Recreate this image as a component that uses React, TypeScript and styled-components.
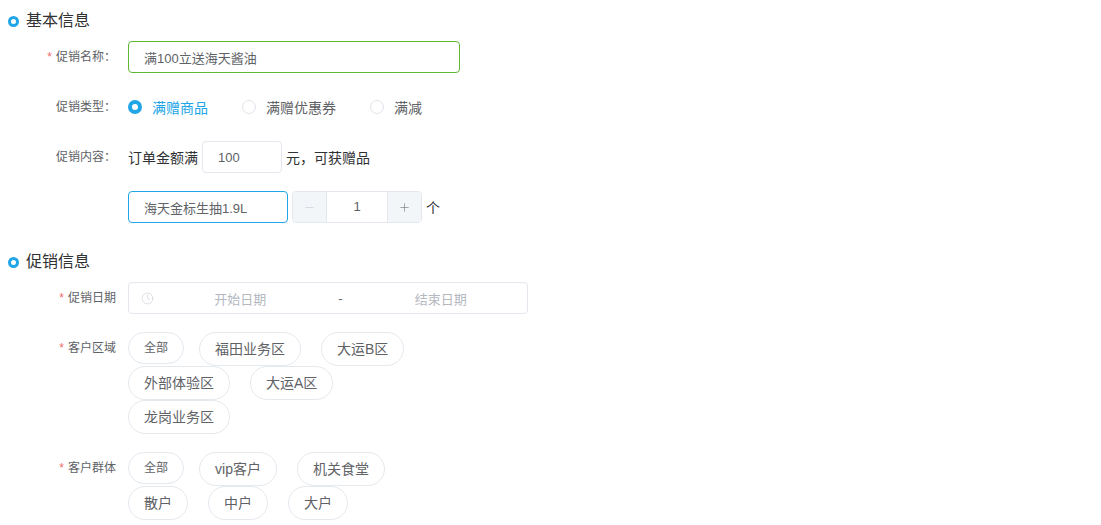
import React from 'react';
import styled, { createGlobalStyle } from 'styled-components';
import { Clock, Minus, Plus } from 'lucide-react';

const GlobalStyle = createGlobalStyle`
  html, body {
    margin: 0;
    padding: 0;
    background: #fff;
  }
  body {
    font-family: "Liberation Sans", "Noto Sans CJK SC", sans-serif;
    color: #303133;
  }
  * {
    box-sizing: border-box;
  }
`;

const Page = styled.div`
  width: 1101px;
  height: 525px;
  padding: 10px 0 0 8px;
  overflow: hidden;
`;

const SectionTitle = styled.h2`
  display: flex;
  align-items: center;
  gap: 7px;
  height: 22px;
  margin: 0 0 9px;
  font-size: 16px;
  font-weight: 400;
  line-height: 22px;
  color: #303133;

  &:not(:first-child) {
    margin-top: 28px;
  }
`;

const Dot = styled.span`
  width: 11px;
  height: 11px;
  border: 3px solid #20a5e6;
  border-radius: 50%;
  background: #fff;
`;

const Row = styled.div`
  display: flex;
  align-items: flex-start;
  margin-bottom: 18px;

  &:last-child {
    margin-bottom: 0;
  }
`;

const Label = styled.label`
  flex: none;
  width: 108px;
  margin-right: 12px;
  font-size: 12px;
  line-height: 32px;
  text-align: right;
  color: #606266;
`;

const Star = styled.span`
  margin-right: 4px;
  color: #f56c6c;
`;

const Controls = styled.div`
  display: flex;
  align-items: center;
  min-height: 32px;
  font-size: 14px;
  color: #303133;
`;

const TextInput = styled.input<{ $width: number; $tone?: 'green' | 'blue' }>`
  width: ${({ $width }) => $width}px;
  height: 32px;
  padding: 0 15px;
  border: 1px solid
    ${({ $tone }) => ($tone === 'green' ? '#5fb832' : $tone === 'blue' ? '#20a5e6' : '#e4e7ed')};
  border-radius: 4px;
  outline: none;
  background: #fff;
  font: inherit;
  font-size: 13px;
  color: #606266;
`;

const RadioOption = styled.span<{ $checked?: boolean }>`
  display: inline-flex;
  align-items: center;
  gap: 10px;
  margin-right: 34px;
  font-size: 14px;
  color: ${({ $checked }) => ($checked ? '#20a5e6' : '#606266')};
`;

const RadioMark = styled.span<{ $checked?: boolean }>`
  width: 14px;
  height: 14px;
  border-radius: 50%;
  border: ${({ $checked }) => ($checked ? '4px solid #20a5e6' : '1px solid #dfe4ea')};
  background: #fff;
`;

const Inline = styled.span`
  margin: 0 4px;
  white-space: nowrap;

  &:first-child {
    margin-left: 0;
  }
`;

const Stepper = styled.div`
  display: flex;
  width: 130px;
  height: 32px;
  margin-left: 4px;
  border: 1px solid #e4e7ed;
  border-radius: 4px;
  overflow: hidden;
`;

const StepButton = styled.button<{ $muted?: boolean }>`
  display: flex;
  flex: none;
  align-items: center;
  justify-content: center;
  width: 33px;
  padding: 0;
  border: none;
  background: #f2f6f9;
  color: ${({ $muted }) => ($muted ? '#c0c4cc' : '#606266')};
`;

const StepValue = styled.div`
  flex: 1;
  border-left: 1px solid #e4e7ed;
  border-right: 1px solid #e4e7ed;
  font-size: 13px;
  line-height: 30px;
  text-align: center;
  color: #606266;
`;

const DateRange = styled.div`
  display: flex;
  align-items: center;
  width: 400px;
  height: 32px;
  padding-left: 12px;
  border: 1px solid #e4e7ed;
  border-radius: 4px;
  color: #c0c4cc;
`;

const DateText = styled.span`
  flex: 1;
  font-size: 13px;
  text-align: center;
  color: #b4b8bf;
`;

const DateDash = styled.span`
  flex: none;
  width: 28px;
  font-size: 13px;
  text-align: center;
  color: #606266;
`;

const ChipGroup = styled.div`
  display: flex;
  flex-wrap: wrap;
  align-items: flex-start;
  width: 300px;
`;

const Chip = styled.span<{ $all?: boolean }>`
  height: ${({ $all }) => ($all ? 32 : 34)}px;
  margin-right: ${({ $all }) => ($all ? 15 : 20)}px;
  margin-bottom: ${({ $all }) => ($all ? 2 : 0)}px;
  padding: 0 15px;
  border: 1px solid #e4e9ee;
  border-radius: 17px;
  background: #fff;
  font-size: ${({ $all }) => ($all ? 12 : 14)}px;
  line-height: ${({ $all }) => ($all ? 30 : 32)}px;
  white-space: nowrap;
  color: #606266;
`;

const regions = ['福田业务区', '大运B区', '外部体验区', '大运A区', '龙岗业务区'];
const groups = ['vip客户', '机关食堂', '散户', '中户', '大户'];

const App: React.FC = () => {
  return (
    <Page>
      <GlobalStyle />
      <SectionTitle>
        <Dot />
        基本信息
      </SectionTitle>
      <Row>
        <Label>
          <Star>*</Star>促销名称：
        </Label>
        <Controls>
          <TextInput $width={332} $tone="green" value="满100立送海天酱油" readOnly />
        </Controls>
      </Row>
      <Row>
        <Label>促销类型：</Label>
        <Controls>
          <RadioOption $checked>
            <RadioMark $checked />
            满赠商品
          </RadioOption>
          <RadioOption>
            <RadioMark />
            满赠优惠券
          </RadioOption>
          <RadioOption>
            <RadioMark />
            满减
          </RadioOption>
        </Controls>
      </Row>
      <Row>
        <Label>促销内容：</Label>
        <Controls>
          <Inline>订单金额满</Inline>
          <TextInput $width={80} value="100" readOnly />
          <Inline>元，可获赠品</Inline>
        </Controls>
      </Row>
      <Row>
        <Label />
        <Controls>
          <TextInput $width={160} $tone="blue" value="海天金标生抽1.9L" readOnly />
          <Stepper>
            <StepButton $muted>
              <Minus size={13} strokeWidth={1} />
            </StepButton>
            <StepValue>1</StepValue>
            <StepButton>
              <Plus size={13} strokeWidth={1} />
            </StepButton>
          </Stepper>
          <Inline>个</Inline>
        </Controls>
      </Row>

      <SectionTitle>
        <Dot />
        促销信息
      </SectionTitle>
      <Row>
        <Label>
          <Star>*</Star>促销日期
        </Label>
        <DateRange>
          <Clock size={13} strokeWidth={1} />
          <DateText>开始日期</DateText>
          <DateDash>-</DateDash>
          <DateText>结束日期</DateText>
        </DateRange>
      </Row>
      <Row>
        <Label>
          <Star>*</Star>客户区域
        </Label>
        <ChipGroup>
          <Chip $all>全部</Chip>
          {regions.map((name) => (
            <Chip key={name}>{name}</Chip>
          ))}
        </ChipGroup>
      </Row>
      <Row>
        <Label>
          <Star>*</Star>客户群体
        </Label>
        <ChipGroup>
          <Chip $all>全部</Chip>
          {groups.map((name) => (
            <Chip key={name}>{name}</Chip>
          ))}
        </ChipGroup>
      </Row>
    </Page>
  );
};

export default App;
